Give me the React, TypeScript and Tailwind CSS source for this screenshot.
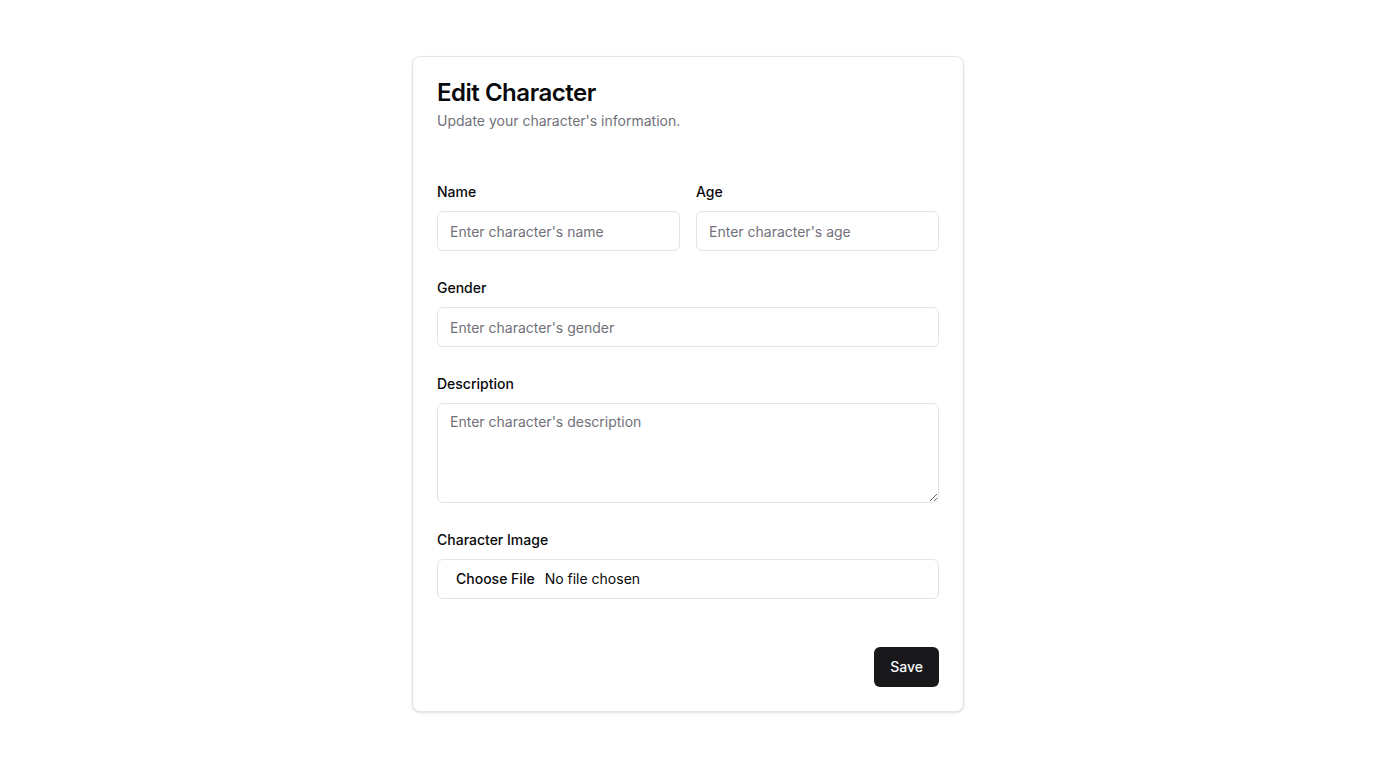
export default function App() {
  return (
    <div className="min-h-screen bg-white flex items-center justify-center font-['Inter',sans-serif] text-[#09090b]">
      <div className="w-[552px] rounded-lg border border-[#e4e4e7] bg-white shadow-sm">
        <div className="flex flex-col gap-1.5 p-6">
          <h2 className="text-2xl font-semibold leading-none tracking-[-0.02em]">Edit Character</h2>
          <p className="text-sm text-[#71717a]">Update your character's information.</p>
        </div>

        <div className="px-6 pt-[27px] pb-6 flex flex-col gap-[27px]">
          <div className="grid grid-cols-2 gap-4">
            <div className="flex flex-col gap-[9px]">
              <label className="text-sm font-medium leading-5">Name</label>
              <input
                className="h-10 w-full rounded-md border border-[#e4e4e7] bg-white px-3 py-2 text-sm placeholder:text-[#71717a] outline-none"
                placeholder="Enter character's name"
              />
            </div>
            <div className="flex flex-col gap-[9px]">
              <label className="text-sm font-medium leading-5">Age</label>
              <input
                className="h-10 w-full rounded-md border border-[#e4e4e7] bg-white px-3 py-2 text-sm placeholder:text-[#71717a] outline-none"
                placeholder="Enter character's age"
              />
            </div>
          </div>

          <div className="flex flex-col gap-[9px]">
            <label className="text-sm font-medium leading-5">Gender</label>
            <input
              className="h-10 w-full rounded-md border border-[#e4e4e7] bg-white px-3 py-2 text-sm placeholder:text-[#71717a] outline-none"
              placeholder="Enter character's gender"
            />
          </div>

          <div className="flex flex-col gap-[9px]">
            <label className="text-sm font-medium leading-5">Description</label>
            <textarea
              className="h-[100px] w-full rounded-md border border-[#e4e4e7] bg-white px-3 py-2 text-sm placeholder:text-[#71717a] outline-none"
              placeholder="Enter character's description"
            />
          </div>

          <div className="flex flex-col gap-[9px]">
            <label className="text-sm font-medium leading-5">Character Image</label>
            <input
              type="file"
              className="h-10 w-full rounded-md border border-[#e4e4e7] bg-white px-3 py-2 text-sm leading-[22px] text-[#09090b] file:mr-1 file:border-0 file:bg-transparent file:px-1.5 file:text-sm file:font-medium file:text-[#09090b]"
            />
          </div>
        </div>

        <div className="flex justify-end px-6 pt-6 pb-6">
          <button className="h-10 rounded-md bg-[#18181b] px-4 text-sm font-medium text-[#fafafa]">Save</button>
        </div>
      </div>
    </div>
  );
}
